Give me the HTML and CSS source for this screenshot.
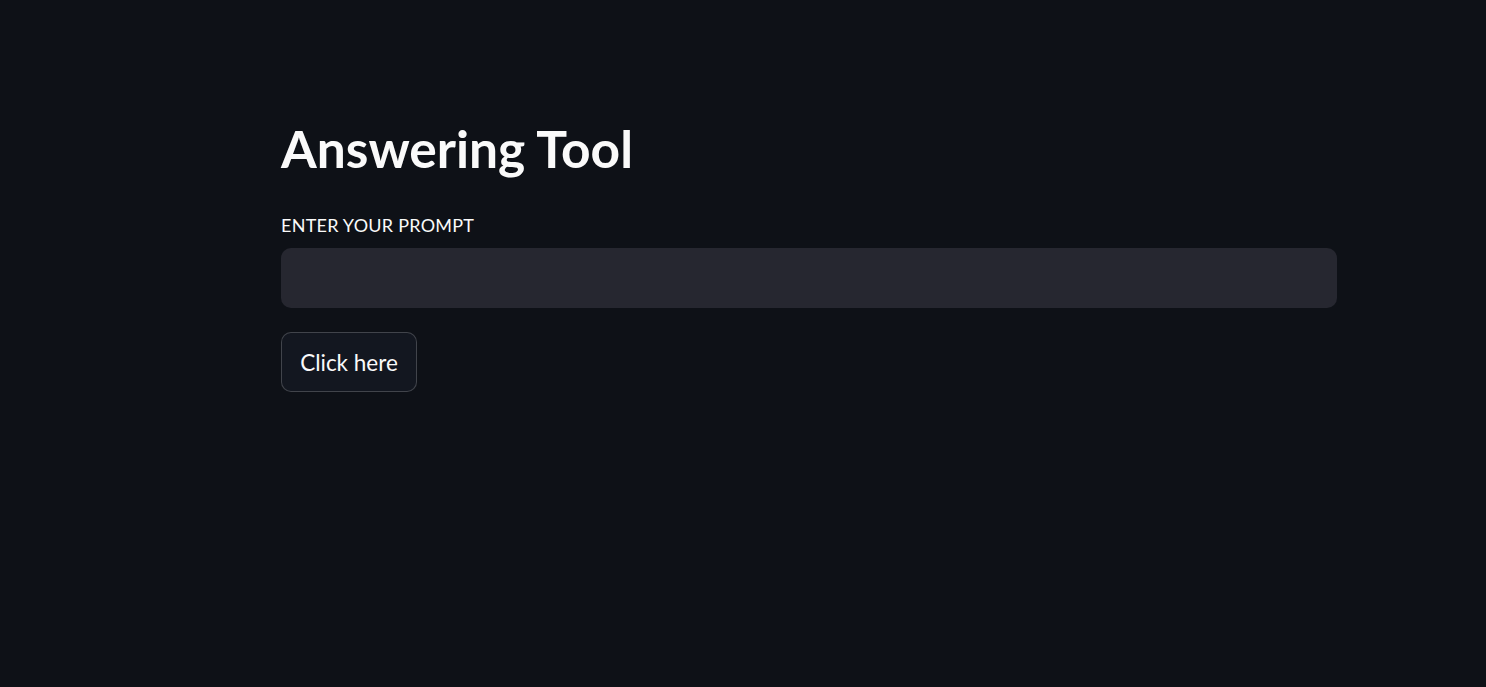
FILE: index.html
```html
<!DOCTYPE html>
<html lang="en">
<head>
<meta charset="utf-8">
<title>Answering Tool</title>
<link rel="stylesheet" href="styles.css">
</head>
<body>
<main class="app">
  <section class="block">
    <h1 class="title">Answering Tool</h1>
    <label class="label" for="prompt">ENTER YOUR PROMPT</label>
    <input class="prompt" id="prompt" type="text">
    <button class="btn" type="button">Click here</button>
  </section>
</main>
</body>
</html>
```
FILE: styles.css
```css
html, body {
  margin: 0;
  padding: 0;
  background: #0e1117;
  height: 100%;
}
body {
  font-family: "Lato", "Open Sans", sans-serif;
  color: #fafafa;
}
.app {
  padding: 118px 0 0 281px;
}
.block {
  width: 1056px;
  display: flex;
  flex-direction: column;
  align-items: flex-start;
}
.title {
  margin: 0;
  font-size: 51.5px;
  line-height: 60px;
  font-weight: 700;
  letter-spacing: 0;
}
.label {
  margin-top: 35px;
  font-size: 18px;
  line-height: 24px;
  letter-spacing: 0.25px;
}
.prompt {
  margin-top: 11px;
  width: 100%;
  height: 60px;
  box-sizing: border-box;
  border: 0;
  border-radius: 10px;
  background: #262730;
  color: #fafafa;
  font: inherit;
  font-size: 20px;
  padding: 0 18px;
  outline: none;
}
.btn {
  margin-top: 24px;
  width: 136px;
  height: 60px;
  box-sizing: border-box;
  border: 1px solid rgba(250, 250, 250, 0.2);
  border-radius: 10px;
  background: rgb(19, 23, 32);
  color: #fafafa;
  font-family: inherit;
  font-size: 22.5px;
  padding: 0;
}
```
